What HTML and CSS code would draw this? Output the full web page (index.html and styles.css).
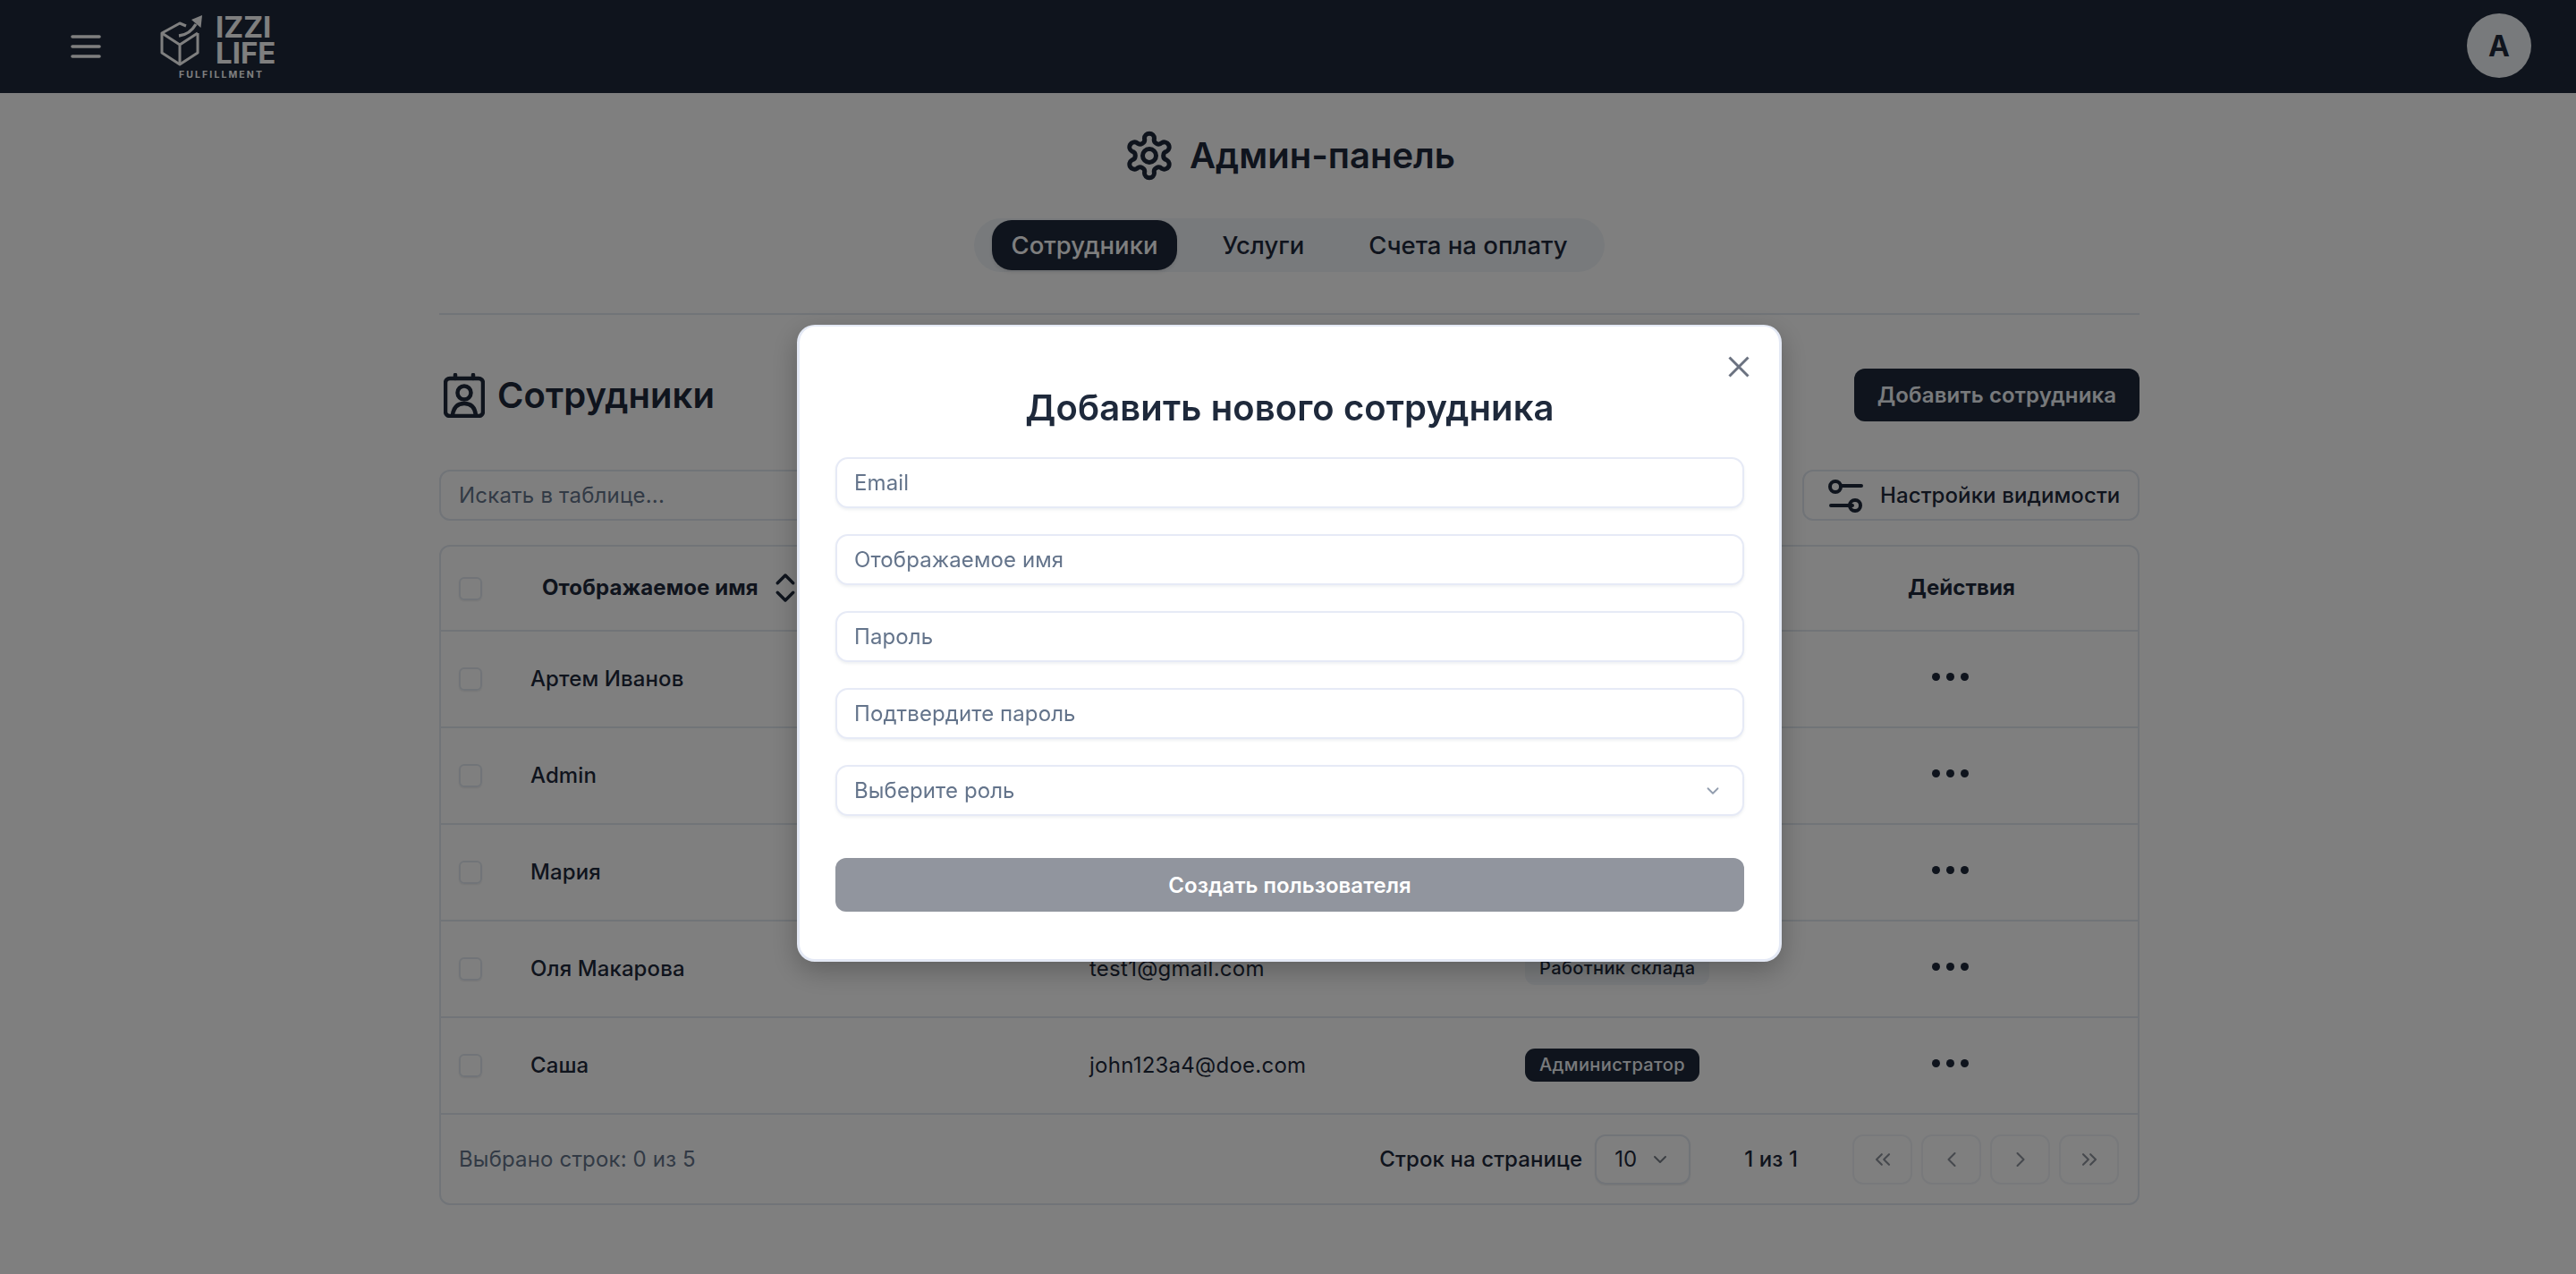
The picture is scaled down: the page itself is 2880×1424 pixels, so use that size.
FILE: index.html
```html
<!DOCTYPE html>
<html lang="ru">
<head>
    <meta charset="UTF-8">
    <meta name="viewport" content="width=device-width, initial-scale=1.0">
    <title>Админ-панель</title>
    <link rel="stylesheet" href="styles.css">
</head>
<body>
    <header class="topbar">
        <button class="burger" aria-label="Меню">
            <svg width="34" height="28" viewBox="0 0 34 28" fill="none" stroke="#fff" stroke-width="3.6" stroke-linecap="round">
                <path d="M2 3h30M2 14h30M2 25h30"/>
            </svg>
        </button>
        <div class="logo">
            <svg class="logo-mark" width="50" height="60" viewBox="0 0 50 60" fill="none" stroke="#fff" stroke-width="3" stroke-linejoin="round">
                <path d="M30 14 23 11 3 22v22l20 13 20-13V22"/>
                <path d="M3 22l20 13 20-13M23 35v22" />
                <path d="M22 25c9-1 15-6 19-13" stroke-width="3.4"/>
                <path d="M36 7 48 2 46.500 16z" fill="#fff" stroke="none"/>
            </svg>
            <div class="logo-name">IZZI<br>LIFE</div>
            <div class="logo-sub">FULFILLMENT</div>
        </div>
        <div class="avatar">A</div>
    </header>

    <main class="page">
        <h1 class="page-title">
            <svg width="56" height="56" viewBox="-28 -28 56 56" fill="none" stroke="#1e293b" stroke-width="5" stroke-linejoin="round">
                <path d="M-5.51-19.23A5.5 5.5 0 0 1 5.51-19.23A5 5 0 0 0 13.89-14.39A5.5 5.5 0 0 1 19.41-4.84A5 5 0 0 0 19.41 4.84A5.5 5.5 0 0 1 13.89 14.39A5 5 0 0 0 5.51 19.23A5.5 5.5 0 0 1-5.51 19.23A5 5 0 0 0-13.89 14.39A5.5 5.5 0 0 1-19.41 4.84A5 5 0 0 0-19.41-4.84A5.500 5.500 0 0 1-13.89-14.39A5 5 0 0 0-5.51-19.23Z"/>
                <circle r="7.500"/>
            </svg>
            Админ-панель
        </h1>
        <nav class="tabs">
            <a class="tab active">Сотрудники</a>
            <a class="tab">Услуги</a>
            <a class="tab">Счета на оплату</a>
        </nav>
        <hr class="divider">

        <div class="section-head">
            <h2 class="section-title">
                <svg width="46" height="50" viewBox="0 0 46 50" fill="none" stroke="#1e293b" stroke-width="4.500" stroke-linecap="round">
                    <rect x="2" y="6" width="42" height="42" rx="5"/>
                    <path d="M13 2v4M33 2v4"/>
                    <circle cx="23" cy="22" r="7.500"/>
                    <path d="M10 47c1-9 6-13 13-13s12 4 13 13"/>
                </svg>
                Сотрудники
            </h2>
            <button class="btn-dark">Добавить сотрудника</button>
        </div>

        <div class="toolbar">
            <input class="search" placeholder="Искать в таблице...">
            <button class="btn-outline">
                <svg width="42" height="42" viewBox="0 0 42 42" fill="none" stroke="#1e293b" stroke-width="4" stroke-linecap="round">
                    <circle cx="10" cy="11" r="6"/>
                    <path d="M17 10h22M5 32h24"/>
                    <circle cx="32" cy="32" r="6"/>
                </svg>
                Настройки видимости
            </button>
        </div>

        <section class="table">
            <div class="row head">
                <span class="check"></span>
                <span class="head-name">Отображаемое имя
                    <svg width="42" height="42" viewBox="0 0 24 24" fill="none" stroke="#1e293b" stroke-width="2" stroke-linecap="round" stroke-linejoin="round">
                        <path d="m7 15 5 5 5-5M7 9l5-5 5 5"/>
                    </svg>
                </span>
                <span></span>
                <span></span>
                <span>Действия</span>
            </div>
            <div class="row">
                <span class="check"></span><span>Артем Иванов</span><span></span><span></span>
                <span class="dots"><i></i><i></i><i></i></span>
            </div>
            <div class="row">
                <span class="check"></span><span>Admin</span><span></span><span></span>
                <span class="dots"><i></i><i></i><i></i></span>
            </div>
            <div class="row">
                <span class="check"></span><span>Мария</span><span></span><span></span>
                <span class="dots"><i></i><i></i><i></i></span>
            </div>
            <div class="row">
                <span class="check"></span><span>Оля Макарова</span><span class="email">test1@gmail.com</span>
                <span><b class="badge light">Работник склада</b></span>
                <span class="dots"><i></i><i></i><i></i></span>
            </div>
            <div class="row">
                <span class="check"></span><span>Саша</span><span class="email">john123a4@doe.com</span>
                <span><b class="badge">Администратор</b></span>
                <span class="dots"><i></i><i></i><i></i></span>
            </div>
            <div class="table-foot">
                <span class="selected">Выбрано строк: 0 из 5</span>
                <div class="per-page">
                    Строк на странице
                    <div class="page-size">10
                        <svg width="24" height="24" viewBox="0 0 24 24" fill="none" stroke="#1e293b" stroke-opacity=".6" stroke-width="2" stroke-linecap="round" stroke-linejoin="round"><path d="m6 9 6 6 6-6"/></svg>
                    </div>
                </div>
                <span class="page-count">1 из 1</span>
                <div class="pager">
                    <button><svg width="28" height="28" viewBox="0 0 24 24"><path d="m11 17-5-5 5-5M18 17l-5-5 5-5"/></svg></button>
                    <button><svg width="28" height="28" viewBox="0 0 24 24"><path d="m15 18-6-6 6-6"/></svg></button>
                    <button><svg width="28" height="28" viewBox="0 0 24 24"><path d="m9 18 6-6-6-6"/></svg></button>
                    <button><svg width="28" height="28" viewBox="0 0 24 24"><path d="m6 17 5-5-5-5M13 17l5-5-5-5"/></svg></button>
                </div>
            </div>
        </section>
    </main>

    <div class="overlay">
        <form class="modal">
            <button type="button" class="close" aria-label="Закрыть">
                <svg width="24" height="24" viewBox="0 0 24 24" fill="none" stroke="#6b7280" stroke-width="3"><path d="M1.500 1.500l21 21M22.500 1.500l-21 21"/></svg>
            </button>
            <h2 class="modal-title">Добавить нового сотрудника</h2>
            <input class="field" placeholder="Email">
            <input class="field" placeholder="Отображаемое имя">
            <input class="field" placeholder="Пароль">
            <input class="field" placeholder="Подтвердите пароль">
            <div class="field select">Выберите роль
                <svg width="22" height="22" viewBox="0 0 24 24" fill="none" stroke="#64748b" stroke-opacity=".7" stroke-width="2" stroke-linecap="round" stroke-linejoin="round"><path d="m6 9 6 6 6-6"/></svg>
            </div>
            <button type="button" class="submit">Создать пользователя</button>
        </form>
    </div>
</body>
</html>
```

FILE: styles.css
```css
* { box-sizing: border-box; }
body { margin: 0; background: #fff; color: #1e293b; font-family: Inter, "Noto Sans", sans-serif; height: 1424px; overflow: hidden; }
button { font-family: inherit; cursor: pointer; }
input { font-family: inherit; outline: none; }
input::placeholder { color: #64748b; opacity: 1; }

.topbar { height: 104px; background: #1e293b; display: flex; align-items: center; padding: 0 50px 0 79px; }
.burger { background: none; border: 0; padding: 0; display: flex; margin-right: 65px; }
.logo { display: grid; grid-template-columns: 63px auto; width: 132px; color: #fff; }
.logo-name { font-weight: 700; font-size: 33px; line-height: 29px; margin-top: 1px; }
.logo-sub { grid-column: 1 / 3; font-size: 10.500px; font-weight: 700; letter-spacing: 2.100px; line-height: 12px; margin: 3px 0 0 22px; white-space: nowrap; }
.avatar { margin: -2px 0 0 auto; width: 72px; height: 72px; border-radius: 50%; background: #f1f5f9; color: #1e293b; display: flex; align-items: center; justify-content: center; font-size: 32px; font-weight: 700; }

.page { width: 1901px; margin-left: 491px; display: flex; flex-direction: column; }
.page-title { margin: 42px 0 0 1px; display: flex; align-items: center; justify-content: center; gap: 17px; font-size: 40px; font-weight: 600; line-height: 56px; }
.tabs { align-self: center; margin-top: 42px; height: 60px; background: #f1f5f9; border-radius: 30px; display: flex; align-items: center; padding: 0 20px; gap: 28px; font-size: 27.500px; font-weight: 500; }
.tab { height: 56px; padding: 0 22px; border-radius: 22px; display: flex; align-items: center; }
.tab.active { background: #1e293b; color: #fff; box-shadow: 0 2px 4px rgba(0,0,0,.1); }
.divider { width: 100%; height: 2px; margin: 46px 0 0; border: 0; background: #e2e8f0; }

.section-head { display: flex; justify-content: space-between; align-items: center; margin-top: 60px; height: 59px; }
.section-title { margin: 0 0 0 5px; display: flex; align-items: center; gap: 14px; font-size: 40px; font-weight: 600; letter-spacing: .05px; }
.btn-dark { height: 59px; width: 319px; background: #1e293b; color: #f1f5f9; border: 0; border-radius: 12px; font-size: 24px; font-weight: 600; letter-spacing: .15px; }

.toolbar { display: flex; justify-content: space-between; margin-top: 54px; }
.search { width: 450px; height: 57px; border: 2px solid #e2e8f0; border-radius: 12px; padding: 0 20px; font-size: 24px; letter-spacing: .2px; background: transparent; }
.btn-outline { width: 377px; height: 57px; border: 2px solid #e2e8f0; border-radius: 12px; background: transparent; color: #1e293b; display: flex; align-items: center; gap: 18px; padding: 0 0 0 25px; font-size: 24px; font-weight: 500; letter-spacing: .1px; }

.table { margin-top: 27px; border: 2px solid #e2e8f0; border-radius: 12px; font-size: 24px; font-weight: 500; letter-spacing: .1px; }
.row { display: grid; grid-template-columns: 100px 625px 487px 428px 1fr; align-items: center; height: 108px; padding-bottom: 2px; border-bottom: 2px solid #e2e8f0; }
.row.head { height: 95px; font-weight: 700; }
.check { width: 26px; height: 26px; margin: 2px 0 0 20px; border: 2px solid #e2e8f0; border-radius: 6px; box-shadow: 0 1px 2px rgba(0,0,0,.08); }
.head-name { display: flex; align-items: center; gap: 9px; margin-left: 13px; white-space: nowrap; }
.dots { display: flex; gap: 7px; margin-left: 27px; margin-top: -4px; }
.dots i { width: 9px; height: 9px; border-radius: 50%; background: #1e293b; }
.email { font-weight: 400; letter-spacing: .25px; }
.badge { display: inline-block; padding: 0 16px; height: 37px; line-height: 37px; border-radius: 11px; background: #1e293b; color: #f1f5f9; font-size: 20px; font-weight: 500; letter-spacing: .4px; }
.badge.light { background: #f1f5f9; color: #1e293b; }

.table-foot { display: flex; align-items: center; height: 99px; padding: 0 21px 0 20px; }
.selected { color: #64748b; font-weight: 400; letter-spacing: .15px; }
.per-page { margin-left: auto; display: flex; align-items: center; gap: 14px; }
.page-size { width: 107px; height: 56px; border: 2px solid #e2e8f0; border-radius: 12px; display: flex; align-items: center; justify-content: space-between; padding: 0 20px; font-weight: 400; box-shadow: 0 1px 2px rgba(0,0,0,.08); }
.page-count { margin: 0 61px 0 60px; }
.pager { display: flex; gap: 10px; }
.pager button { width: 67px; height: 56px; border: 2px solid #e2e8f0; border-radius: 12px; background: transparent; display: flex; align-items: center; justify-content: center; opacity: .5; padding: 0; }
.pager svg { fill: none; stroke: #1e293b; stroke-width: 1.800; stroke-linecap: round; stroke-linejoin: round; }

.overlay { position: fixed; inset: 0; background: rgba(0,0,0,.5); padding: 363px 0 0 891px; }
.modal { position: relative; width: 1101px; height: 712px; background: #fff; border: 3px solid #e4e9f5; border-top-width: 2px; border-radius: 20px; padding: 0 39px 0 40px; display: flex; flex-direction: column; box-shadow: 0 10px 30px rgba(0,0,0,.25); }
.close { position: absolute; top: 33px; right: 33px; background: none; border: 0; padding: 0; display: flex; }
.modal-title { margin: 67px 0 0; text-align: center; font-size: 40px; font-weight: 600; line-height: 48px; letter-spacing: .1px; }
.field { height: 57px; flex: none; width: 100%; margin-bottom: 29px; border: 2px solid #e6eaf6; border-radius: 14px; padding: 0 19px; font-size: 24px; letter-spacing: .1px; background: #fff; box-shadow: 0 2px 3px rgba(100,116,139,.1); }
.modal-title + .field { margin-top: 31px; }
.select { margin-bottom: 47px; color: #64748b; display: flex; align-items: center; justify-content: space-between; padding-right: 22px; }
.submit { height: 60px; flex: none; background: #91959e; color: #fff; border: 0; border-radius: 12px; font-size: 24px; font-weight: 600; }
```
